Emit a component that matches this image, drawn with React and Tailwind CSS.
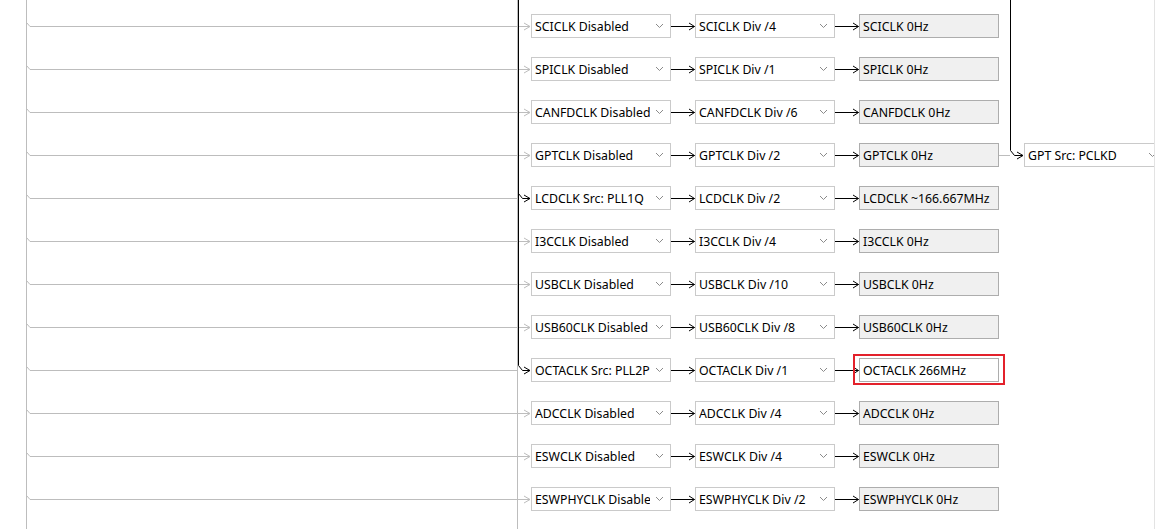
import React from "react";

const rows = [
  { src: "SCICLK Disabled", div: "SCICLK Div /4", out: "SCICLK 0Hz" },
  { src: "SPICLK Disabled", div: "SPICLK Div /1", out: "SPICLK 0Hz" },
  { src: "CANFDCLK Disabled", div: "CANFDCLK Div /6", out: "CANFDCLK 0Hz" },
  { src: "GPTCLK Disabled", div: "GPTCLK Div /2", out: "GPTCLK 0Hz", gpt: true },
  { src: "LCDCLK Src: PLL1Q", div: "LCDCLK Div /2", out: "LCDCLK ~166.667MHz", fed: true },
  { src: "I3CCLK Disabled", div: "I3CCLK Div /4", out: "I3CCLK 0Hz" },
  { src: "USBCLK Disabled", div: "USBCLK Div /10", out: "USBCLK 0Hz" },
  { src: "USB60CLK Disabled", div: "USB60CLK Div /8", out: "USB60CLK 0Hz" },
  { src: "OCTACLK Src: PLL2P", div: "OCTACLK Div /1", out: "OCTACLK 266MHz", fed: true, picked: true },
  { src: "ADCCLK Disabled", div: "ADCCLK Div /4", out: "ADCCLK 0Hz" },
  { src: "ESWCLK Disabled", div: "ESWCLK Div /4", out: "ESWCLK 0Hz" },
  { src: "ESWPHYCLK Disabled", div: "ESWPHYCLK Div /2", out: "ESWPHYCLK 0Hz" },
];

const rowY = (i) => 26.5 + 43 * i;

function Combo({ text }) {
  return (
    <div className="w-[140px] h-[24px] shrink-0 border border-[#cacaca] bg-white flex items-center pl-[3px] pr-[6px]">
      <span className="flex-1 overflow-hidden whitespace-nowrap text-[12.3px] leading-[16px] pt-px text-black">
        {text}
      </span>
      <svg width="9" height="6" viewBox="0 0 9 6" className="ml-[5px] shrink-0">
        <path d="M1 1 L4.5 4.5 L8 1" fill="none" stroke="#8a8a8a" strokeWidth="1" />
      </svg>
    </div>
  );
}

function Output({ text, picked }) {
  return (
    <div
      className={
        "relative w-[140px] h-[24px] shrink-0 border border-[#adadad] flex items-center pl-[3px] " +
        (picked ? "bg-white" : "bg-[#f0f0f0]")
      }
    >
      <span className="whitespace-nowrap text-[12.3px] leading-[16px] pt-px text-black">
        {text}
      </span>
      {picked ? (
        <div className="absolute -left-[7px] -right-[7px] -top-[5px] -bottom-[4px] border-2 border-[#e3212b]" />
      ) : null}
    </div>
  );
}

function Arrow() {
  return (
    <svg width="24" height="24" viewBox="0 0 24 24" className="shrink-0">
      <path d="M0 12.5 H23.5" stroke="#000" strokeWidth="1" />
      <path d="M18 9 L23.5 12.5 L18 16" fill="none" stroke="#000" strokeWidth="1" />
    </svg>
  );
}

function Wires() {
  return (
    <svg className="absolute inset-0" width="1159" height="529">
      <path d="M26.5 0 V529" stroke="#bdbdbd" />
      <path d="M517.5 0 V529" stroke="#bdbdbd" />
      {rows.map((r, i) => {
        const y = rowY(i);
        return (
          <g key={r.src} fill="none" stroke="#bdbdbd">
            <path d={`M26.5 ${y - 4} L30 ${y} H${r.fed ? 518 : 530}`} />
            {r.fed ? null : <path d={`M524 ${y - 3.5} L530 ${y} L524 ${y + 3.5}`} />}
          </g>
        );
      })}
      <g fill="none" stroke="#000">
        <path d={`M518.5 0 V${rowY(8) - 5} L522.5 ${rowY(8)} H530`} />
        <path d={`M524 ${rowY(8) - 3.5} L530 ${rowY(8)} L524 ${rowY(8) + 3.5}`} />
        <path d={`M518.5 ${rowY(4) - 5} L522.5 ${rowY(4)} H530`} />
        <path d={`M524 ${rowY(4) - 3.5} L530 ${rowY(4)} L524 ${rowY(4) + 3.5}`} />
        <path d={`M1010.5 0 V${rowY(3) - 5} L1014.5 ${rowY(3)} H1023`} />
        <path d={`M1017 ${rowY(3) - 3.5} L1023 ${rowY(3)} L1017 ${rowY(3) + 3.5}`} />
      </g>
      <path d={`M999 ${rowY(3)} H1010`} stroke="#bdbdbd" />
    </svg>
  );
}

export default function App() {
  return (
    <div className="relative w-[1159px] h-[529px] overflow-hidden bg-white font-['Noto_Sans','Noto_Sans_CJK_SC',sans-serif]">
      <Wires />
      <div className="relative w-[1155px] overflow-hidden flex flex-col gap-[19px] pt-[14px] pl-[531px]">
        {rows.map((r) => (
          <div key={r.src} className="flex items-center">
            <Combo text={r.src} />
            <Arrow />
            <Combo text={r.div} />
            <Arrow />
            <Output text={r.out} picked={r.picked} />
            {r.gpt ? (
              <>
                <div className="w-[25px] shrink-0" />
                <Combo text="GPT Src: PCLKD" />
              </>
            ) : null}
          </div>
        ))}
      </div>
      <div className="absolute top-0 bottom-0 left-[1154px] w-px bg-[#e3e3e3]" />
    </div>
  );
}
